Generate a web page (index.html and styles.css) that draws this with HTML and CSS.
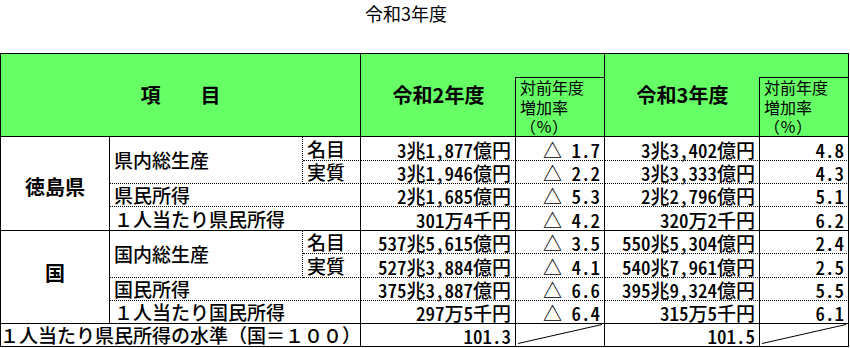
FILE: index.html
```html
<!DOCTYPE html>
<html lang="ja">
<head>
<meta charset="utf-8">
<link rel="stylesheet" href="styles.css">
</head>
<body>
<div class="title">令和3年度</div>
<div class="grid">
  <div class="c hd h-item">項　　目</div>
  <div class="c hd h-year y2">令和2年度</div>
  <div class="c hd h-blank b5"></div>
  <div class="c hd h-year y3">令和3年度</div>
  <div class="c hd h-blank b7"></div>
  <div class="c hd h-rate r5">対前年度<br>増加率<br>（％）</div>
  <div class="c hd h-rate r7">対前年度<br>増加率<br>（％）</div>

  <div class="c reg reg1">徳島県</div>
  <div class="c l gdp g1">県内総生産</div>
  <div class="c l sub dot">名目</div>
  <div class="c v dot">3兆1,877億円</div>
  <div class="c v dot">△ 1.7</div>
  <div class="c v dot">3兆3,402億円</div>
  <div class="c v dot">4.8</div>

  <div class="c l sub dot">実質</div>
  <div class="c v dot">3兆1,946億円</div>
  <div class="c v dot">△ 2.2</div>
  <div class="c v dot">3兆3,333億円</div>
  <div class="c v dot">4.3</div>

  <div class="c l span2 dot">県民所得</div>
  <div class="c v dot">2兆1,685億円</div>
  <div class="c v dot">△ 5.3</div>
  <div class="c v dot">2兆2,796億円</div>
  <div class="c v dot">5.1</div>

  <div class="c l span2">１人当たり県民所得</div>
  <div class="c v">301万4千円</div>
  <div class="c v">△ 4.2</div>
  <div class="c v">320万2千円</div>
  <div class="c v">6.2</div>

  <div class="c reg reg2">国</div>
  <div class="c l gdp g2">国内総生産</div>
  <div class="c l sub dot">名目</div>
  <div class="c v dot">537兆5,615億円</div>
  <div class="c v dot">△ 3.5</div>
  <div class="c v dot">550兆5,304億円</div>
  <div class="c v dot">2.4</div>

  <div class="c l sub dot">実質</div>
  <div class="c v dot">527兆3,884億円</div>
  <div class="c v dot">△ 4.1</div>
  <div class="c v dot">540兆7,961億円</div>
  <div class="c v dot">2.5</div>

  <div class="c l span2 dot">国民所得</div>
  <div class="c v dot">375兆3,887億円</div>
  <div class="c v dot">△ 6.6</div>
  <div class="c v dot">395兆9,324億円</div>
  <div class="c v dot">5.5</div>

  <div class="c l span2">１人当たり国民所得</div>
  <div class="c v">297万5千円</div>
  <div class="c v">△ 6.4</div>
  <div class="c v">315万5千円</div>
  <div class="c v">6.1</div>

  <div class="c level">１人当たり県民所得の水準（国＝１００）</div>
  <div class="c v">101.3</div>
  <div class="c diag"><svg viewBox="0 0 88 22" preserveAspectRatio="none"><line x1="2" y1="19.5" x2="86" y2="0.5"/></svg></div>
  <div class="c v">101.5</div>
  <div class="c diag"><svg viewBox="0 0 88 22" preserveAspectRatio="none"><line x1="2" y1="19.5" x2="86" y2="0.5"/></svg></div>
</div>
</body>
</html>
```

FILE: styles.css
```css
body {
  margin: 0;
  background: #fff;
  color: #000;
  font-family: "Noto Sans CJK JP", sans-serif;
}

.title {
  width: 812px;
  height: 53px;
  text-align: center;
  font-size: 18px;
  line-height: 26px;
}

.grid {
  display: grid;
  width: max-content;
  grid-template-columns: 109px 193px 58px 155px 89px 155px 89px;
  grid-template-rows: 24px 59px 24px 23px 23px 24px 23px 24px 23px 23px 23px;
  border-top: 1px solid #000;
  border-left: 1px solid #000;
}

.c {
  box-sizing: border-box;
  display: flex;
  align-items: center;
  border-right: 1px solid #000;
  border-bottom: 1px solid #000;
  font-size: 19px;
  font-weight: 500;
  line-height: 20px;
  white-space: nowrap;
}

.hd {
  background: #66ff66;
}

.h-item {
  grid-column: 1 / 4;
  grid-row: 1 / 3;
  justify-content: center;
  font-weight: bold;
  font-size: 20px;
}

.h-year {
  grid-row: 1 / 3;
  justify-content: center;
  font-weight: bold;
  font-size: 20px;
  border-right: none;
}

.y2 { grid-column: 4; }
.y3 { grid-column: 6; }

.h-blank {
  grid-row: 1;
  border-bottom: none;
}

.b5 { grid-column: 5; }
.b7 { grid-column: 7; }

.h-rate {
  grid-row: 2;
  display: block;
  font-size: 16px;
  font-weight: 400;
  line-height: 19.5px;
  padding: 0 0 0 4px;
  box-shadow: -1px 0 0 #000, 0 -1px 0 #000, -1px -1px 0 #000;
}

.r5 { grid-column: 5; }
.r7 { grid-column: 7; }

.reg {
  grid-column: 1;
  justify-content: center;
  font-weight: bold;
  font-size: 20px;
}

.reg1 { grid-row: 3 / 7; padding-top: 6px; }
.reg2 { grid-row: 7 / 11; padding-bottom: 8px; }

.l {
  padding-left: 4px;
}

.gdp {
  grid-column: 2;
  border-right: 1px dotted #000;
  border-bottom: 1px dotted #000;
}

.g1 { grid-row: 3 / 5; }
.g2 { grid-row: 7 / 9; }

.sub {
  grid-column: 3;
}

.span2 {
  grid-column: 2 / 4;
  padding-left: 4px;
}

.dot {
  border-bottom: 1px dotted #000;
}

.v {
  justify-content: flex-end;
  padding-right: 4px;
  padding-top: 2px;
  font-feature-settings: "hwid";
}

.level {
  grid-column: 1 / 4;
  justify-content: center;
}

.diag svg {
  display: block;
  width: 100%;
  height: 100%;
}

.diag line {
  stroke: #000;
  stroke-width: 1;
}
```
